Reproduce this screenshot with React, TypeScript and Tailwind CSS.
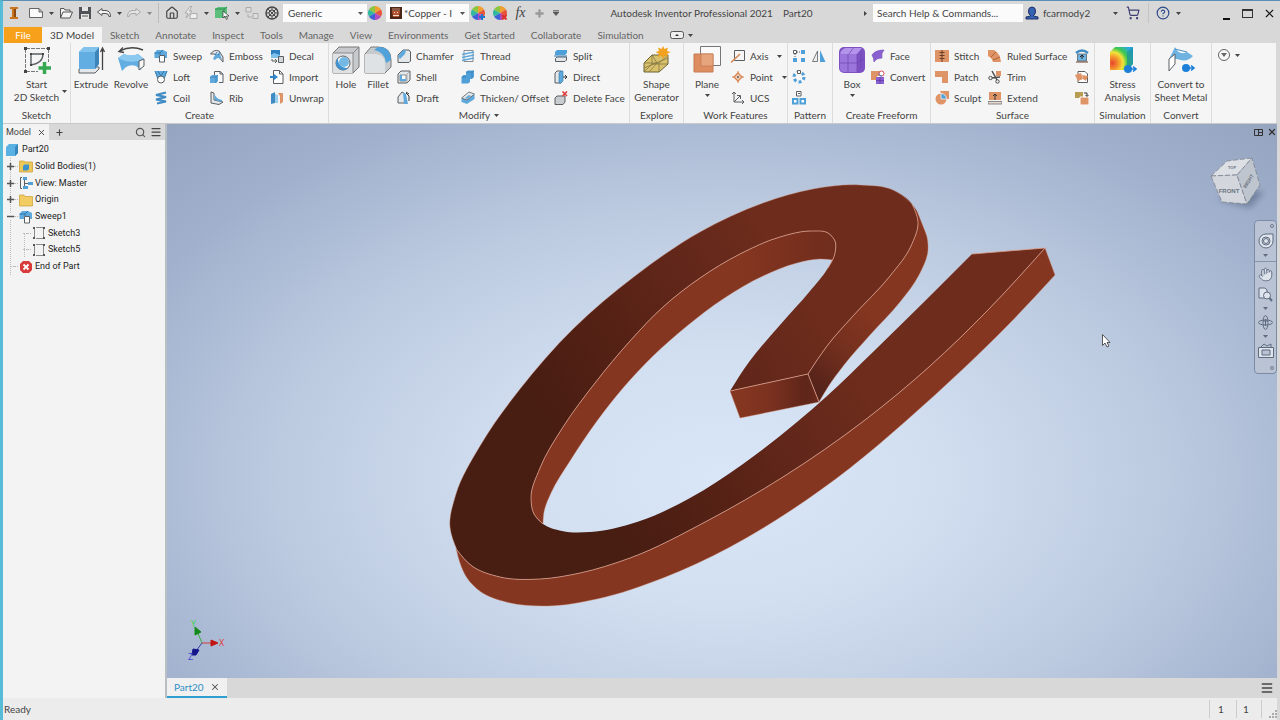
import React from 'react';
import { Search, Menu, X, Plus, ShoppingCart, CircleHelp, House, Hand } from 'lucide-react';

type Point = [number, number];

const gap = (a: Point, b: Point) => Math.hypot(b[0] - a[0], b[1] - a[1]);

// smooth cubic path through the points, tangents weighted by chord length
const spline = (pts: Point[], move = true) => {
  const last = pts.length - 1;
  const tangent = (i: number): Point => {
    const h0 = gap(pts[i - 1], pts[i]);
    const h1 = gap(pts[i], pts[i + 1]);
    return [0, 1].map(
      (k) =>
        (((pts[i][k] - pts[i - 1][k]) / h0) * h1 + ((pts[i + 1][k] - pts[i][k]) / h1) * h0) / (h0 + h1),
    ) as Point;
  };
  const endTangent = (i: number, j: number, inner: Point): Point => {
    const h = gap(pts[i], pts[j]);
    return [0, 1].map((k) => (1.5 * (pts[j][k] - pts[i][k])) / h - inner[k] / 2) as Point;
  };
  const tangents = pts.map((_, i) => (i > 0 && i < last ? tangent(i) : ([0, 0] as Point)));
  tangents[0] = endTangent(0, 1, tangents[1]);
  tangents[last] = endTangent(last - 1, last, tangents[last - 1]);
  let d = `${move ? 'M' : 'L'}${pts[0][0]},${pts[0][1]}`;
  for (let i = 0; i < last; i++) {
    const h = gap(pts[i], pts[i + 1]) / 3;
    const [b, c, m, n] = [pts[i], pts[i + 1], tangents[i], tangents[i + 1]];
    d += `C${b[0] + m[0] * h},${b[1] + m[1] * h} ${c[0] - n[0] * h},${c[1] - n[1] * h} ${c[0]},${c[1]}`;
  }
  return d;
};

const outerEdge: Point[] = [
  [1045, 248], [987, 311], [930, 366], [865, 420], [783, 477], [707, 521], [630, 558], [580, 573],
  [540, 579], [500, 577], [472, 566], [457, 550],
];
const outerBack: Point[] = [
  [457, 550], [450, 527], [456, 494], [480, 446], [520, 389], [573, 329], [635, 276], [700, 232],
  [763, 203], [813, 189], [860, 185], [893, 190], [912, 204], [918, 222], [911, 246], [890, 276],
  [853, 316], [827, 346], [808, 374],
];
const innerEdge: Point[] = [
  [730, 391], [749, 362], [780, 325], [810, 291], [828, 268], [835, 253], [835, 241], [828, 233],
  [812, 231], [780, 237], [740, 254], [700, 278], [663, 307], [630, 341], [595, 383], [563, 427],
  [540, 468], [531, 498], [534, 514], [543, 524], [562, 531], [590, 532], [637, 522], [690, 498],
  [743, 464], [797, 422], [827, 396], [873, 352], [925, 301], [972, 254],
];
const outerBottom: Point[] = [
  [456, 548], [460, 563], [467, 578], [481, 592], [506, 602], [547, 606], [597, 599], [663, 578],
  [730, 547], [790, 511], [850, 468], [907, 420], [963, 369], [1010, 323], [1055, 275],
];
const innerWallTop = innerEdge.slice(4, 20);
const innerWallBottom: Point[] = [
  [543, 524], [544, 512], [551, 493], [570, 461], [597, 421], [623, 388], [653, 356], [687, 326],
  [723, 299], [763, 276], [797, 263], [820, 259], [833, 260],
];
const hookWall: Point[] = [
  [819, 402], [828, 387], [844, 365], [870, 335], [900, 302], [919, 275], [928, 250], [927, 237],
  [923, 226], [917, 211],
];

const Model: React.FC = () => (
  <svg
    className="absolute inset-0 size-full"
    viewBox="167 124 1110 554"
    preserveAspectRatio="xMidYMid slice"
    role="img"
    aria-label="Part20 model"
  >
    <defs>
      <linearGradient id="face" gradientUnits="userSpaceOnUse" x1="560" y1="440" x2="800" y2="290">
        <stop offset="0" stopColor="#481d12" />
        <stop offset="0.35" stopColor="#552115" />
        <stop offset="0.8" stopColor="#66291b" />
        <stop offset="1" stopColor="#6d2c1c" />
      </linearGradient>
      <linearGradient id="wall" gradientUnits="userSpaceOnUse" x1="640" y1="0" x2="840" y2="0">
        <stop offset="0" stopColor="#853620" />
        <stop offset="0.5" stopColor="#853620" />
        <stop offset="1" stopColor="#6e2b1c" />
      </linearGradient>
      <linearGradient id="hook" gradientUnits="userSpaceOnUse" x1="815" y1="385" x2="880" y2="320">
        <stop offset="0" stopColor="#56231a" />
        <stop offset="0.5" stopColor="#74301e" />
        <stop offset="1" stopColor="#853620" />
      </linearGradient>
      <linearGradient id="cap" gradientUnits="userSpaceOnUse" x1="740" y1="0" x2="818" y2="0">
        <stop offset="0" stopColor="#853620" />
        <stop offset="0.4" stopColor="#7a311f" />
        <stop offset="0.85" stopColor="#5e2519" />
        <stop offset="1" stopColor="#6a2a1c" />
      </linearGradient>
    </defs>
    <path d={`${spline(innerWallTop)}${spline(innerWallBottom, false)}Z`} fill="url(#wall)" />
    <path d={`${spline(hookWall)}${spline(outerBack.slice(12), false)}Z`} fill="url(#hook)" />
    <path d={`${spline(outerEdge)}${spline(outerBottom, false)}Z`} fill="#853620" />
    <path
      d={`${spline(outerEdge)}${spline(outerBack, false)}${spline(innerEdge, false)}Z`}
      fill="url(#face)"
    />
    <path d="M730 391L808 374L819 402L740 418Z" fill="url(#cap)" />
    <g fill="none" stroke="#dda08c" strokeWidth="0.8">
      <path d={spline(outerEdge)} />
      <path d={spline(innerWallTop)} />
      <path d={spline(outerBack.slice(12))} />
      <path d="M730 391L808 374L819 402M972 254L1045 248" />
    </g>
    <g fill="none" stroke="#d08f78" strokeWidth="0.4">
      <path d={spline(outerBack.slice(0, 13))} />
      <path d={spline(outerBottom)} />
      <path d={spline(hookWall)} />
      <path d={spline(innerWallBottom)} />
      <path d="M1045 248L1055 275M730 391L740 418L819 402" />
    </g>
    {/* origin triad */}
    <g strokeWidth="1" fontFamily="Open Sans, sans-serif" fontSize="9">
      <path d="M202 643L197 631" stroke="#3fae45" />
      <path d="M202 643H212" stroke="#d03a3a" />
      <path d="M202 643L196 651" stroke="#3b3b9a" />
      <path d="M195 627L201 632L195 635Z" fill="#138a1b" stroke="#138a1b" />
      <path d="M211 640L218 643L211 646Z" fill="#c31414" stroke="#c31414" />
      <path d="M193 649L199 650L196 655L192 655Z" fill="#15158c" stroke="#15158c" />
      <text x="191" y="627" fill="#3fd44a">Y</text>
      <text x="219" y="646" fill="#e03535">X</text>
      <text x="188" y="660" fill="#3d42d0">Z</text>
    </g>
    <path
      d="M1102.500 334.500V345.500L1105 343L1107 347L1109 346L1107 342.500H1110Z"
      fill="#fff"
      stroke="#333"
      strokeWidth="0.8"
    />
  </svg>
);

const blue = '#5fa9dc';
const pale = '#e4e7e9';
const line = '#5b5f63';
const orange = '#df9468';

// 14 x 14 drawings
const small: Record<string, React.ReactNode> = {
  sweep: (
    <>
      <path d="M0.500 4L3 1H9L13 3V9H8V6H5V9H0.500Z" fill={blue} />
      <path d="M0.500 4H6L9 1M6 4V6" stroke="#2f77ad" fill="none" />
      <path d="M5.500 6.500H10.500V13H5.500Z" fill="#fff" stroke={line} />
    </>
  ),
  loft: (
    <>
      <path d="M1 1H13L10 9H4Z" fill={blue} />
      <path d="M1 1L4 9M13 1L10 9M4 1L7 6L10 1" stroke="#2f77ad" fill="none" />
      <circle cx="7" cy="9.500" r="3.500" fill="#fff" stroke={line} />
    </>
  ),
  coil: (
    <path
      d="M12 1.500L2 4L12 6L2 8.500L12 10.500L3 12.500"
      stroke="#3f8cc4"
      strokeWidth="2"
      fill="none"
    />
  ),
  emboss: (
    <>
      <path d="M0.500 5Q4 0 9 2L13 8V13L8 7Q4 4 0.500 5Z" fill={pale} stroke={line} />
      <path d="M3 10Q5 4 10 5L12 11Q8 7 5 11Z" fill={blue} />
      <path d="M5 6L7 3M8 6L10 3" stroke="#2f77ad" />
    </>
  ),
  derive: (
    <>
      <path d="M4.500 6V1.500H10L13 4V12.500H9" fill="#fafafa" stroke={line} />
      <path d="M10 1.500V4H13" fill="none" stroke={line} />
      <path d="M0 7L2 5H8V11L6 13H0Z" fill={blue} />
      <path d="M0 7H6V13M6 7L8 5" stroke="#2f77ad" strokeWidth="0.600" fill="none" />
    </>
  ),
  rib: (
    <>
      <path d="M1 1L4 2V9L13 11L9 13.500L1 12Z" fill={pale} stroke={line} />
      <path d="M4.500 3Q6 8 12 9V11L4.500 9Z" fill={blue} />
    </>
  ),
  decal: (
    <>
      <path d="M1 1H10V9H1Z" fill="#2d7fc0" />
      <path d="M1 6L4 4L10 6V9H1Z" fill="#7fc1ea" />
      <path d="M8.500 7.500H13.500V13.500H8.500Z" fill="#d4d8db" stroke={line} />
      <path d="M2 10V12H6M5 10L7 12L5 14" stroke={line} fill="none" />
    </>
  ),
  import: (
    <>
      <path d="M3.500 0.500H9.500L13 4V13.500H3.500Z" fill="#fff" stroke={line} />
      <path d="M9.500 0.500V4H13" fill="none" stroke={line} />
      <path d="M0 6H4V4L8 7L4 10V8H0Z" fill="#2d88cf" />
    </>
  ),
  unwrap: (
    <>
      <path d="M1 3L5 1V12L1 13Z" fill="#3f8cc4" />
      <path d="M5 3L8 4V12L5 12Z" fill="#9accec" />
      <path d="M8 2H13V11L10 13V5Z" fill={orange} />
    </>
  ),
  chamfer: (
    <>
      <path d="M1 6L6 1H12L13.500 3V12L12 13.500H1Z" fill={pale} stroke={line} />
      <path d="M1 7L6 1H9L8 5L3 10Z" fill={blue} />
    </>
  ),
  shell: (
    <>
      <path d="M1 4L4 1H13V10L10 13H1Z" fill={pale} stroke={line} />
      <path d="M3 5H9V11H3Z" fill="#fff" stroke={line} strokeWidth="0.700" />
      <path d="M3 5H5V9H9V11H3Z" fill={blue} />
      <path d="M10 4V13M10 4L13 1" stroke="#8a8d90" strokeWidth="0.600" />
    </>
  ),
  draft: (
    <>
      <path d="M1 12V6L5 1L8 3V12Z" fill={pale} stroke={line} />
      <path d="M6 1L9 3L11 13H7Z" fill={blue} />
      <path d="M9 2L12 5V10M9 1L12 3" stroke="#333" fill="none" />
    </>
  ),
  thread: (
    <>
      <path d="M3 1.500H12V12.500H3Z" fill="#f7f7f7" stroke={line} strokeWidth="0.700" />
      <path d="M1 5.500L13 3M1 8.500L13 6M1 11.500L13 9" stroke={blue} strokeWidth="1.500" />
    </>
  ),
  combine: (
    <>
      <path d="M5 2L7 0.500H13V7L11 9H9V12L7 13.500H0.500V7L2.500 5H5Z" fill="#4f9fd8" />
      <path d="M5 2H11L13 0.500M11 2V8M1 7H5" stroke="#2f77ad" strokeWidth="0.600" fill="none" />
    </>
  ),
  thicken: (
    <>
      <path d="M0.500 8L8 2L13.500 4V8L6 13L0.500 11Z" fill={blue} />
      <path d="M0.500 7L8 1L13.500 3L6 9Z" fill={pale} stroke={line} strokeWidth="0.800" />
      <path d="M4 7L8 4L10 5L6 8Z" fill={blue} />
    </>
  ),
  split: (
    <>
      <path d="M1 3L3 1H13V4L11 6H1Z" fill="#4f9fd8" />
      <path d="M1.500 9.500L3 8H12.500V11L11 12.500H1.500Z" fill={pale} stroke={line} />
      <path d="M0 7H13" stroke="#2f77ad" />
    </>
  ),
  direct: (
    <>
      <path d="M1 3L3 1H7V13H1Z" fill={pale} stroke={line} />
      <path d="M5 3L7 1H9V11L7 13H5Z" fill={blue} stroke="#2f77ad" strokeWidth="0.600" />
      <path d="M9 7H13M11 5L13 7L11 9" stroke="#333" fill="none" />
    </>
  ),
  deleteFace: (
    <>
      <path d="M1 7L3 5H11V11L9 13.500H1Z" fill="#c9cccf" stroke={line} />
      <path d="M8.500 0.500L13 5M13 0.500L8.500 5" stroke="#e23b3b" strokeWidth="1.600" />
    </>
  ),
  axis: (
    <>
      <path d="M3.500 1.500H13.500V11.500H3.500Z" fill="none" stroke={line} />
      <path d="M0 13.500L9 5" stroke="#d98655" strokeWidth="1.500" />
    </>
  ),
  point: (
    <>
      <path d="M7 1V13M1 7H13" stroke="#d98655" />
      <path d="M7 3L11 7L7 11L3 7Z" fill="#f4d3bd" stroke="#d98655" strokeWidth="1.400" />
      <circle cx="7" cy="7" r="1" fill="#555" />
    </>
  ),
  ucs: (
    <path
      d="M3 1V11H13M3 11L9 5M1 3L3 1L5 3M11 9L13 11L11 13M6 4.500H9.500V8"
      stroke={line}
      fill="none"
    />
  ),
  rectangular: (
    <>
      <path d="M1.500 1.500H4.500V4.500H1.500Z" fill="#fff" stroke={line} />
      <path d="M9 1H13V5H9ZM1 9H5V13H1ZM9 9H13V13H9Z" fill="#4f9fd8" />
      <path d="M5 3H9M3 5V9" stroke={line} strokeDasharray="1 1" />
    </>
  ),
  mirror: (
    <>
      <path d="M5.500 2V12.500H0.500Z" fill="#eee" stroke={line} strokeWidth="0.800" />
      <path d="M8 1V13H13.500Z" fill="#4f9fd8" />
    </>
  ),
  circular: (
    <>
      <circle cx="7" cy="7" r="5" fill="none" stroke="#4f9fd8" strokeWidth="3" strokeDasharray="2.900 2.300" />
      <path d="M5.500 0.500H8.500V3.500H5.500Z" fill="#fff" stroke={line} />
    </>
  ),
  sketchDriven: (
    <>
      <path d="M4.500 0.500H9V5H4.500Z" fill="#fff" stroke={line} />
      <path d="M6 2.500H8" stroke={line} />
      <path d="M1 8H5.500V12.500H1ZM8.500 8H13V12.500H8.500Z" fill="#fff" stroke="#4f9fd8" strokeWidth="2" />
    </>
  ),
  face: (
    <path d="M1 6Q4 1 13 1Q10 4 11 9Q5 9 3 13Q3 9 1 6Z" fill="#8a5fd0" stroke="#6f46b4" strokeWidth="0.600" />
  ),
  convert: (
    <>
      <path d="M0 1H9V6H6V10H0Z" fill={orange} />
      <path d="M5 7H13V14H5Z" fill="#8a5fd0" />
      <path d="M9 7V14M5 10.500H13" stroke="#5c35a3" strokeWidth="0.700" />
      <circle cx="10.500" cy="3.500" r="2.500" fill="#fff" stroke="#e24b5b" />
      <path d="M8 3.500A2.500 2.500 0 0 0 11 6" fill="none" stroke="#2d7fd0" />
    </>
  ),
  stitch: (
    <>
      <path d="M0 1H14V13H0Z" fill={orange} />
      <path d="M7 1V13M4.500 3.500H9.500M4.500 6.500H9.500M4.500 9.500H9.500" stroke="#6a3f28" />
    </>
  ),
  patch: <path d="M0 1H13V13H7V7H0Z" fill={orange} />,
  sculpt: (
    <>
      <path d="M5 0H14V8H9Z" fill={orange} />
      <circle cx="6" cy="8" r="5.500" fill={orange} />
      <path d="M6 2.500A5.500 5.500 0 0 1 11.500 8L6 8Z" fill="#4f9fd8" stroke="#fff" strokeWidth="0.700" />
    </>
  ),
  ruled: (
    <>
      <path d="M0 1H6Q12 4 13 13H5Q4 9 0 7Z" fill={orange} />
      <path d="M3 8L8 3M5 11L12 8" stroke="#b06235" />
    </>
  ),
  trim: (
    <>
      <path d="M8 1H13V6H8Z" fill={orange} />
      <path d="M4 1L9 10M12 7L3 8" stroke="#4a4a4a" strokeWidth="1.500" />
      <circle cx="2.500" cy="8" r="1.700" fill="#f5f5f5" stroke="#4a4a4a" />
      <circle cx="9.500" cy="11.500" r="1.700" fill="#f5f5f5" stroke="#4a4a4a" />
    </>
  ),
  extend: (
    <>
      <path d="M1 1H13V9H1Z" fill={orange} />
      <path d="M0 10.500H14V13H0Z" fill="#e9d9cf" stroke={line} strokeWidth="0.700" />
      <path d="M7 9V3M5 5L7 3L9 5" stroke="#333" fill="none" />
    </>
  ),
  replace: (
    <>
      <path d="M1 4Q7 -1 13 4" stroke="#3f8cc4" strokeWidth="2.500" fill="none" />
      <path d="M2.500 5H11.500V12H2.500Z" fill="#6fb5e2" stroke={line} strokeWidth="0.800" />
      <path d="M1 13H13" stroke="#6a3f28" />
      <path d="M7 10V6M5 8L7 6L9 8" stroke="#222" fill="none" />
    </>
  ),
  repair: (
    <>
      <path d="M3 1.500H10L12.500 4V12.500H3Z" fill="#fff" stroke={line} />
      <path d="M0 5L6 3L8 9L3 11Z" fill={orange} />
      <path d="M7 5L13 6L11 11L8 9Z" fill={orange} />
    </>
  ),
  fitMesh: (
    <>
      <path d="M0 1H8V7H0Z" fill="#b79c52" />
      <path d="M5 6H14V14H5Z" fill={orange} stroke="#fff" />
      <path d="M9 2H12V5M10.500 4L12 5.500L13.500 4" stroke="#333" fill="none" />
    </>
  ),
  part: (
    <>
      <path d="M1 4L4 1H13V10L10 13H1Z" fill="#59b0e3" />
      <path d="M10 4V13L13 10V1Z" fill="#3586ba" />
    </>
  ),
  bodies: (
    <>
      <path d="M0.500 2H5L6 3H13.500V13H0.500Z" fill="#edc75a" stroke="#c99d33" strokeWidth="0.700" />
      <path d="M4 7L5.500 5.500H10V10L8.500 11.500H4Z" fill="#3f93ca" />
    </>
  ),
  folder: <path d="M0.500 2H5L6 3.500H13.500V13H0.500Z" fill="#f2cc62" stroke="#c99d33" strokeWidth="0.700" />,
  view: (
    <>
      <path d="M3 1.500H1.500V12.500H3M5.500 3V11.500M5.500 7.500H9" stroke={line} fill="none" />
      <path d="M4 1H8V4H4ZM9 6H14V9H9ZM4 10H9V13H4Z" fill="#4f9fd8" />
    </>
  ),
  sketch: (
    <>
      <path d="M2.500 3V12M11.500 3V12M4 1.500H11M4 12.500H11" stroke="#8a8a8a" fill="none" />
      <path d="M1 1H3V3H1ZM11 1H13V3H11ZM1 11H3V13H1ZM11 11H13V13H11Z" fill="#555" />
    </>
  ),
  end: (
    <>
      <path d="M4 1H10L13 4V10L10 13H4L1 10V4Z" fill="#d93a3a" />
      <path d="M4.500 4.500L9.500 9.500M9.500 4.500L4.500 9.500" stroke="#fff" strokeWidth="1.800" />
    </>
  ),
};

// 28 x 28 drawings
const large: Record<string, React.ReactNode> = {
  startSketch: (
    <>
      <path d="M3 2.500H25M2.500 3V24M25.500 3V16M3 25.500H15" stroke="#777" strokeDasharray="4 1" />
      <path d="M8 8H20Q20 17 8 19Z" fill="none" stroke={line} strokeWidth="1.400" />
      <path d="M1 1H4V4H1ZM24 1H27V4H24ZM1 24H4V27H1ZM7 7H9V9H7ZM19 7H21V9H19ZM7 18H9V20H7Z" fill="#444" />
      <path d="M21.500 16V28M15.500 22H28" stroke="#35a852" strokeWidth="3.500" />
    </>
  ),
  extrude: (
    <>
      <path d="M2 23L7 21H22V23L18 27H2Z" fill={pale} stroke={line} />
      <path d="M2 6L7 1H22V18L18 23H2Z" fill="#62aee2" />
      <path d="M18 6V23L22 18V1Z" fill="#3f84b8" />
      <path d="M2 6L7 1H22L18 6Z" fill="#82c3ee" />
      <path d="M25.500 24V3M23.500 6L25.500 2L27.500 6" stroke="#444" strokeWidth="1.300" fill="none" />
    </>
  ),
  revolve: (
    <>
      <path d="M3 5Q14 -1 26 4M6 1.500L2 5.500L7 6.500" stroke="#444" strokeWidth="1.400" fill="none" />
      <path d="M1 12L7 8Q14 11 21 8L27 13L24 24L19 20Q14 18 9 21L5 25Z" fill="#62aee2" />
      <path d="M1 12L7 8Q14 11 21 8L27 13Q14 19 1 12Z" fill="#8bc9f0" />
      <path d="M22 15L27 13V20L22 24Z" fill="#f6f6f6" stroke={line} />
    </>
  ),
  hole: (
    <>
      <path d="M1 7L7 1H27V21L21 27H1Z" fill="#c7cacc" stroke="#777" />
      <path d="M1 7H21V27H1Z" fill="#dfe2e4" />
      <path d="M21 7L27 1M1 7H21V27" stroke="#888" fill="none" />
      <circle cx="11" cy="17" r="7" fill="#f7fbfd" stroke={line} />
      <path d="M6 12A7 7 0 0 0 16 22A9 9 0 0 1 6 12Z" fill="#3f93d0" />
      <circle cx="12" cy="16" r="5" fill="#74b8e4" />
    </>
  ),
  fillet: (
    <>
      <path d="M1 8L7 1H14Q27 1 27 14V21L21 27H1Z" fill="#c7cacc" stroke="#777" />
      <path d="M1 8H10Q21 8 21 18V27H1Z" fill="#dfe2e4" />
      <path d="M10 4L14 1Q27 1 27 14L22 17Q21 6 10 4Z" fill="#4fa2da" />
    </>
  ),
  shape: (
    <>
      <path d="M1 17L9 9H25V18L16 26H1Z" fill="#d9c06a" stroke="#6b6235" />
      <path d="M1 17H16L25 9M16 17V26M6 26L14 17L9 9M1 22L25 12M1 26L9 18H25M9 9V18" stroke="#7a7044" strokeWidth="0.700" fill="none" />
      <path d="M20 0L21.500 3L25 1.500L24 5L27.500 6L24 8L25 11L21.500 9.500L20 13L18.500 9.500L15 11L16 8L12.500 6L16 5L15 1.500L18.500 3Z" fill="#f3a21f" />
    </>
  ),
  plane: (
    <>
      <path d="M7.500 0.500H27.500V19.500H7.500Z" fill="#fafafa" stroke="#777" />
      <path d="M1 8H20V26H1Z" fill="#dd8d60" stroke="#c57a4f" />
      <path d="M8 8H20V20H8Z" fill="#e7a57e" stroke="#bd7449" strokeWidth="0.600" />
    </>
  ),
  box: (
    <>
      <rect x="1" y="1" width="26" height="26" rx="5" fill="#7d50c4" />
      <path d="M2 7Q5 2 8 2H24L19 8H3Z" fill="#b493ea" />
      <path d="M2 8H19V26H6Q2 26 2 22Z" fill="#9c75dc" />
      <path d="M10 8V26M2 17H19L27 12M19 8V26M16 1L11 8M23 5V22" stroke="#6b46ac" strokeWidth="0.700" fill="none" />
    </>
  ),
  sheet: (
    <>
      <path d="M2 13L8 1Q12 10 20 6L26 10Q20 17 10 13Z" fill="#6fb3e2" />
      <path d="M2 13L8 8V18L2 25Z" fill="#fff" stroke={line} />
      <path d="M8 3L20 6" stroke="#4b8fc2" />
      <circle cx="19" cy="22" r="4" fill="#1d7fd8" />
      <path d="M19 22H26M24 19.500L27 22L24 24.500" stroke="#1d7fd8" strokeWidth="1.600" fill="none" />
    </>
  ),
  stress: (
    <>
      <defs>
        <radialGradient id="heat" cx="0.1" cy="0.700" r="0.950">
          <stop offset="0" stopColor="#e8452f" />
          <stop offset="0.300" stopColor="#f59a2c" />
          <stop offset="0.500" stopColor="#f2e33b" />
          <stop offset="0.700" stopColor="#3cc94d" />
          <stop offset="1" stopColor="#2aa9e0" />
        </radialGradient>
      </defs>
      <path d="M1 6L6 1H24V18L18 24H1Z" fill="url(#heat)" />
      <path d="M18 6L24 1V18L18 24Z" fill="#1c8d95" fillOpacity="0.600" />
      <circle cx="19" cy="23" r="4" fill="#1d7fd8" />
      <path d="M19 23H26M24 20.500L27 23L24 25.500" stroke="#1d7fd8" strokeWidth="1.600" fill="none" />
    </>
  ),
};

const Icon: React.FC<{ name: string }> = ({ name }) => (
  <svg className="size-3.5 shrink-0" viewBox="0 0 14 14" fill="none" aria-hidden="true">
    {small[name]}
  </svg>
);

const Caret: React.FC<{ className?: string }> = ({ className = 'text-[#444]' }) => (
  <svg className={`h-[3px] w-[5px] shrink-0 ${className}`} viewBox="0 0 5 3" aria-hidden="true">
    <path d="M0 0H5L2.500 3Z" fill="currentColor" />
  </svg>
);

interface BigProps {
  icon: string;
  lines: string[];
  className: string;
  caret?: boolean;
}

const BigTool: React.FC<BigProps> = ({ icon, lines, className, caret }) => (
  <button className={`flex shrink-0 flex-col items-center ${className}`}>
    <svg className="size-7" viewBox="0 0 28 28" fill="none" aria-hidden="true">
      {large[icon]}
    </svg>
    <span className="mt-1 whitespace-nowrap leading-[13px]">
      {lines.map((text) => (
        <span className="block" key={text}>
          {text}
        </span>
      ))}
    </span>
    {caret && <Caret className="mt-[3px] text-[#444]" />}
  </button>
);

interface Tool {
  icon: string;
  label?: string;
  caret?: boolean;
}

const ToolColumn: React.FC<{ tools: Tool[]; className?: string }> = ({ tools, className = '' }) => (
  <div className={`flex shrink-0 flex-col gap-px ${className}`}>
    {tools.map(({ icon, label, caret }) => (
      <button className="flex h-5 items-center gap-[5px] whitespace-nowrap" key={icon} aria-label={label || icon}>
        <Icon name={icon} />
        {label}
        {caret && <Caret className="ml-1 text-[#444]" />}
      </button>
    ))}
  </div>
);

interface PanelProps {
  title: string;
  className: string;
  caret?: boolean;
  children?: React.ReactNode;
}

const Panel: React.FC<PanelProps> = ({ title, className, caret, children }) => (
  <section className={`flex shrink-0 flex-col border-r border-[#dcdcdc] ${className}`}>
    <div className="flex flex-1 pt-[3px]">{children}</div>
    <h2 className="flex h-4 items-center justify-center gap-1 whitespace-nowrap">
      {title}
      {caret && <Caret />}
    </h2>
  </section>
);

const tabs = [
  'Sketch',
  'Annotate',
  'Inspect',
  'Tools',
  'Manage',
  'View',
  'Environments',
  'Get Started',
  'Collaborate',
  'Simulation',
];

const ColorWheel: React.FC<{ badge?: 'add' | 'clear' }> = ({ badge }) => (
  <svg className="size-3.5 shrink-0" viewBox="0 0 14 14" aria-hidden="true">
    <path d="M7 7L7 0A7 7 0 0 1 13 3.500Z" fill="#f0a030" />
    <path d="M7 7L13 3.500A7 7 0 0 1 13 10.500Z" fill="#e8553a" />
    <path d="M7 7L13 10.500A7 7 0 0 1 7 14Z" fill="#b04bc0" />
    <path d="M7 7L7 14A7 7 0 0 1 1 10.500Z" fill="#3f62d8" />
    <path d="M7 7L1 10.500A7 7 0 0 1 1 3.500Z" fill="#2fb7a0" />
    <path d="M7 7L1 3.500A7 7 0 0 1 7 0Z" fill="#8bc63f" />
    {badge === 'add' && <path d="M11 8V14M8 11H14" stroke="#1f74d0" strokeWidth="2" />}
    {badge === 'clear' && <path d="M9 9L13.500 13.500M13.500 9L9 13.500" stroke="#e0302c" strokeWidth="2" />}
  </svg>
);

const TitleBar: React.FC = () => (
  <header className="mb-0.5 flex h-6 shrink-0 items-center text-[#444]">
    <div className="flex w-[276px] shrink-0 items-center justify-between pl-1.5">
      <svg className="mr-1 h-3.5 w-2.5" viewBox="0 0 10 14" aria-label="Inventor">
        <path d="M1 1H9V3H7V11H9V13H1V11H3V3H1Z" fill="#c9731d" />
        <path d="M5 3H7V11H5Z" fill="#8c4a12" />
      </svg>
      <button aria-label="New">
        <svg className="h-3 w-3.5" viewBox="0 0 14 12" fill="#fafafa" stroke="#666">
          <path d="M0.500 1.500H10L13.500 5V10.500H0.500ZM10 1.500V5H13.500" />
        </svg>
      </button>
      <Caret />
      <button aria-label="Open">
        <svg className="h-3 w-3.5" viewBox="0 0 14 12" fill="#f4f4f4" stroke="#555">
          <path d="M1.500 11V1.500H5L6 3H11V5M1.500 11L4 5H13.500L11 11Z" />
        </svg>
      </button>
      <button aria-label="Save">
        <svg className="size-3" viewBox="0 0 12 12">
          <path d="M0 0H12V12H0Z" fill="#505357" />
          <path d="M3 0H9V4H3ZM2 7H10V12H2Z" fill="#e5e5e5" />
          <path d="M3 9H9" stroke="#505357" />
        </svg>
      </button>
      <button aria-label="Undo">
        <svg className="h-2.5 w-3.5" viewBox="0 0 14 10" fill="#f4f4f4" stroke="#555">
          <path d="M0.500 4L5 0.500V2.500H9Q13.500 3 13.500 8.500H12Q11.500 5.500 9 5.500H5V7.500Z" />
        </svg>
      </button>
      <Caret />
      <button aria-label="Redo">
        <svg className="h-2.5 w-3.5" viewBox="0 0 14 10" fill="#e4e4e4" stroke="#aaa">
          <path d="M13.500 4L9 0.500V2.500H5Q0.500 3 0.500 8.500H2Q2.500 5.500 5 5.500H9V7.500Z" />
        </svg>
      </button>
      <Caret className="text-[#888]" />
      <span className="h-5 w-px bg-[#bbb]" />
      <button aria-label="Home">
        <House size={14} strokeWidth={2} />
      </button>
      <button aria-label="Update">
        <svg className="size-3.5" viewBox="0 0 14 14" fill="#eee" stroke="#aaa">
          <path d="M6 0.500L1 7H4L2 12L8 5H5L8 0.500ZM8 7.500H13V12.500H6V9Z" />
        </svg>
      </button>
      <Caret />
      <button aria-label="Select">
        <svg className="size-3.5" viewBox="0 0 14 14">
          <path d="M0 3L3 1H12V10L10 12H0Z" fill="#5cc07c" />
          <path d="M0 3H9V12M9 3L12 1" stroke="#2f8f50" fill="none" />
          <path d="M8 5V12L10 10L11.500 13.500L12.500 13L11.500 10H14Z" fill="#fff" stroke="#333" strokeWidth="0.700" />
        </svg>
      </button>
      <Caret />
      <button aria-label="Relationships">
        <svg className="size-3.5" viewBox="0 0 14 14" fill="#ddd" stroke="#aaa">
          <path d="M1 1.500H6V6H1ZM8 7.500H13V12.500H8ZM3 8V11H7" />
        </svg>
      </button>
      <button aria-label="Material browser">
        <svg className="size-3.5" viewBox="0 0 14 14" fill="none" stroke="#4a4a4a">
          <circle cx="7" cy="7" r="6" strokeWidth="1.500" />
          <circle cx="7" cy="7" r="3" />
          <path d="M3 3L11 11M11 3L3 11M7 1V4M7 10V13M1 7H4M10 7H13" />
        </svg>
      </button>
    </div>
    <div className="relative ml-1 flex h-[18px] w-[84px] shrink-0 items-center bg-[#fbfbfb]">
      <select className="size-full appearance-none pl-[5px] outline-none" aria-label="Material">
        <option>Generic</option>
      </select>
      <Caret className="pointer-events-none absolute right-1 text-[#555]" />
    </div>
    <span className="ml-px mr-1">
      <ColorWheel />
    </span>
    <div className="relative flex h-[18px] w-[83px] shrink-0 items-center bg-[#fbfbfb] pl-1">
      <svg className="size-3 shrink-0" viewBox="0 0 12 12" aria-hidden="true">
        <path d="M0 0H12V12H0Z" fill="#4a2618" />
        <path d="M2 1H10V4H2Z" fill="#8a5a44" />
        <path d="M2 4H10L9 10H3Z" fill="#b4532e" />
        <path d="M4 5H5V6H4ZM7 5H8V6H7ZM3 8H9V9H3Z" fill="#f1d9cb" />
      </svg>
      <select className="h-full min-w-0 flex-1 appearance-none pl-0.5 outline-none" aria-label="Appearance">
        <option>*Copper - I</option>
      </select>
      <Caret className="pointer-events-none absolute right-1 text-[#555]" />
    </div>
    <div className="flex w-[90px] shrink-0 items-center justify-between pl-0.5">
      <ColorWheel badge="add" />
      <ColorWheel badge="clear" />
      <span className="font-['Liberation_Serif',serif] text-[14px] italic leading-4">fx</span>
      <Plus size={11} strokeWidth={5} color="#999" />
      <svg className="h-1.5 w-1.5" viewBox="0 0 6 6" aria-hidden="true">
        <path d="M0 0.500H6M0 2H6L3 5.500Z" fill="#555" stroke="#555" strokeWidth="0.700" />
      </svg>
    </div>
    <h1 className="ml-auto whitespace-nowrap">Autodesk Inventor Professional 2021</h1>
    <span className="ml-2.5 mr-auto">Part20</span>
    <svg className="mr-1.5 h-[5px] w-[3px]" viewBox="0 0 3 5" aria-hidden="true">
      <path d="M0 0V5L3 2.500Z" fill="#444" />
    </svg>
    <input
      className="h-[18px] w-[150px] shrink-0 bg-[#fbfbfb] pl-1 outline-none placeholder:text-[#444]"
      aria-label="Search"
      placeholder="Search Help & Commands..."
    />
    <div className="flex w-[257px] shrink-0 items-center pl-0.5">
      <svg className="size-3.5" viewBox="0 0 14 14" aria-hidden="true">
        <path d="M3.500 5A3.500 4 0 0 1 10.500 5Q10.500 9 8.500 9V10L13 11V13H1V11L5.500 10V9Q3.500 9 3.500 5Z" fill="#3663b4" stroke="#1f2f63" />
      </svg>
      <span className="ml-1 w-[70px]">fcarmody2</span>
      <Caret />
      <ShoppingCart className="ml-2 text-[#3c3f73]" size={14} strokeWidth={2} />
      <span className="ml-2 h-5 w-px bg-[#c4c4c4]" />
      <CircleHelp className="ml-[7px] text-[#2c4a8a]" size={14} strokeWidth={2} />
      <Caret className="ml-1.5 text-[#444]" />
      <div className="ml-auto flex items-center gap-2.5 pr-1 text-[#111]">
        <button className="flex h-3.5 w-3 items-end justify-center" aria-label="Minimize">
          <span className="h-0.5 w-[7px] bg-[#111]" />
        </button>
        <button className="h-[9px] w-[11px] border border-t-2 border-[#333]" aria-label="Maximize" />
        <button aria-label="Close">
          <X size={13} strokeWidth={2} />
        </button>
      </div>
    </div>
  </header>
);

const Ribbon: React.FC = () => (
  <div className="mr-1 flex h-20 shrink-0 bg-[#f5f5f5] text-[#444]">
    <Panel title="Sketch" className="w-[68px]">
      <BigTool icon="startSketch" lines={['Start', '2D Sketch']} className="w-[59px] pl-2" />
      <span className="mt-11">
        <Caret className="text-[#444]" />
      </span>
    </Panel>
    <Panel title="Create" className="w-[258px]">
      <BigTool icon="extrude" lines={['Extrude']} className="w-10" />
      <BigTool icon="revolve" lines={['Revolve']} className="w-10" />
      <ToolColumn
        className="ml-[3px] w-14"
        tools={[
          { icon: 'sweep', label: 'Sweep' },
          { icon: 'loft', label: 'Loft' },
          { icon: 'coil', label: 'Coil' },
        ]}
      />
      <ToolColumn
        className="w-[60px]"
        tools={[
          { icon: 'emboss', label: 'Emboss' },
          { icon: 'derive', label: 'Derive' },
          { icon: 'rib', label: 'Rib' },
        ]}
      />
      <ToolColumn
        tools={[
          { icon: 'decal', label: 'Decal' },
          { icon: 'import', label: 'Import' },
          { icon: 'unwrap', label: 'Unwrap' },
        ]}
      />
    </Panel>
    <Panel title="Modify" className="w-[301px]" caret>
      <BigTool icon="hole" lines={['Hole']} className="ml-px w-8" />
      <BigTool icon="fillet" lines={['Fillet']} className="w-8" />
      <ToolColumn
        className="ml-[3px] w-16"
        tools={[
          { icon: 'chamfer', label: 'Chamfer' },
          { icon: 'shell', label: 'Shell' },
          { icon: 'draft', label: 'Draft' },
        ]}
      />
      <ToolColumn
        className="w-[93px]"
        tools={[
          { icon: 'thread', label: 'Thread' },
          { icon: 'combine', label: 'Combine' },
          { icon: 'thicken', label: 'Thicken/ Offset' },
        ]}
      />
      <ToolColumn
        tools={[
          { icon: 'split', label: 'Split' },
          { icon: 'direct', label: 'Direct' },
          { icon: 'deleteFace', label: 'Delete Face' },
        ]}
      />
    </Panel>
    <Panel title="Explore" className="w-[54px]">
      <BigTool icon="shape" lines={['Shape', 'Generator']} className="w-full" />
    </Panel>
    <Panel title="Work Features" className="w-[104px]">
      <BigTool icon="plane" lines={['Plane']} className="w-[46px]" caret />
      <ToolColumn
        className="ml-px"
        tools={[
          { icon: 'axis', label: 'Axis', caret: true },
          { icon: 'point', label: 'Point', caret: true },
          { icon: 'ucs', label: 'UCS' },
        ]}
      />
    </Panel>
    <Panel title="Pattern" className="w-[45px]">
      <ToolColumn
        className="ml-1 w-5"
        tools={[{ icon: 'rectangular' }, { icon: 'circular' }, { icon: 'sketchDriven' }]}
      />
      <ToolColumn tools={[{ icon: 'mirror' }]} />
    </Panel>
    <Panel title="Create Freeform" className="w-[98px]">
      <BigTool icon="box" lines={['Box']} className="w-[38px]" caret />
      <ToolColumn
        tools={[
          { icon: 'face', label: 'Face' },
          { icon: 'convert', label: 'Convert' },
        ]}
      />
    </Panel>
    <Panel title="Surface" className="w-[164px]">
      <ToolColumn
        className="ml-1 w-[53px]"
        tools={[
          { icon: 'stitch', label: 'Stitch' },
          { icon: 'patch', label: 'Patch' },
          { icon: 'sculpt', label: 'Sculpt' },
        ]}
      />
      <ToolColumn
        className="w-[87px]"
        tools={[
          { icon: 'ruled', label: 'Ruled Surface' },
          { icon: 'trim', label: 'Trim' },
          { icon: 'extend', label: 'Extend' },
        ]}
      />
      <ToolColumn tools={[{ icon: 'replace' }, { icon: 'repair' }, { icon: 'fitMesh' }]} />
    </Panel>
    <Panel title="Simulation" className="w-14">
      <BigTool icon="stress" lines={['Stress', 'Analysis']} className="w-full" />
    </Panel>
    <Panel title="Convert" className="w-[61px]">
      <BigTool icon="sheet" lines={['Convert to', 'Sheet Metal']} className="w-full" />
    </Panel>
    <button className="flex items-center gap-1 self-start pl-[5px] pt-[5px]" aria-label="Show panels">
      <svg className="size-3.5" viewBox="0 0 14 14" aria-hidden="true">
        <circle cx="7" cy="7" r="5.500" fill="#f8f8f8" stroke="#666" />
        <path d="M4 5H10L7 9Z" fill="#666" />
      </svg>
      <Caret />
    </button>
  </div>
);

interface Node {
  icon: string;
  label: string;
  toggle?: '+' | '-';
  depth: number;
}

const nodes: Node[] = [
  { icon: 'bodies', label: 'Solid Bodies(1)', toggle: '+', depth: 1 },
  { icon: 'view', label: 'View: Master', toggle: '+', depth: 1 },
  { icon: 'folder', label: 'Origin', toggle: '+', depth: 1 },
  { icon: 'sweep', label: 'Sweep1', toggle: '-', depth: 1 },
  { icon: 'sketch', label: 'Sketch3', depth: 2 },
  { icon: 'sketch', label: 'Sketch5', depth: 2 },
  { icon: 'end', label: 'End of Part', depth: 1 },
];

const Browser: React.FC = () => (
  <aside className="flex w-[162px] shrink-0 flex-col bg-[#f3f3f3] font-['Roboto',sans-serif] text-[9px] text-[#222]">
    <div className="flex h-4 items-center bg-[#d8d8d8]">
      <button className="flex h-full items-center gap-1.5 bg-[#f3f3f3] px-[3px] text-[#444]">
        Model
        <X size={9} strokeWidth={2.500} />
      </button>
      <button className="ml-1.5" aria-label="Add panel">
        <Plus size={9} strokeWidth={3} color="#444" />
      </button>
      <button className="ml-auto" aria-label="Search browser">
        <Search size={11} strokeWidth={2.500} color="#555" />
      </button>
      <button className="ml-1 mr-[3px]" aria-label="Browser menu">
        <Menu size={12} strokeWidth={2.500} color="#444" />
      </button>
    </div>
    <div className="relative pt-px">
      <span className="absolute left-[7px] top-[18px] h-[117px] border-l border-dotted border-[#bbb]" />
      <span className="absolute left-[21px] top-[94px] h-[23px] border-l border-dotted border-[#bbb]" />
      <div className="flex h-[17px] items-center gap-[3px] pl-0.5">
        <Icon name="part" />
        Part20
      </div>
      <ul className="flex h-[117px] flex-col">
        {nodes.map(({ icon, label, toggle, depth }) => (
          <li className={`relative flex flex-1 items-center ${depth === 2 ? 'pl-[17px]' : 'pl-1'}`} key={label}>
            {toggle ? (
              <button className="flex w-[7px] justify-center bg-[#f3f3f3]" aria-label={`Toggle ${label}`}>
                <svg className="size-[7px]" viewBox="0 0 7 7" stroke="#555" strokeWidth="1.500">
                  <path d={toggle === '+' ? 'M3.500 0V7M0 3.500H7' : 'M0 3.500H7'} />
                </svg>
              </button>
            ) : (
              <span className="ml-[3px] w-1 border-t border-dotted border-[#bbb]" />
            )}
            <span className="mr-px w-1 border-t border-dotted border-[#bbb]" />
            <Icon name={icon} />
            <span className="ml-0.5">{label}</span>
          </li>
        ))}
      </ul>
    </div>
  </aside>
);

const ViewCube: React.FC = () => (
  <svg className="absolute right-2.5 top-6 h-[70px] w-[65px]" viewBox="1202 148 65 70" role="img" aria-label="View cube">
    <defs>
      <filter id="soft" x="-30%" y="-80%" width="160%" height="260%">
        <feGaussianBlur stdDeviation="3" />
      </filter>
    </defs>
    <path d="M1218 200L1250 208L1264 192L1240 188Z" fill="#60708e" opacity="0.7" filter="url(#soft)" />
    <g stroke="#7d848f" strokeWidth="0.8" strokeDasharray="5 2">
      <path d="M1211 176L1227 161L1252 158L1237 175Z" fill="#dcdfe4" />
      <path d="M1211 176L1237 175L1247 204L1222 202Z" fill="#d3d7dd" />
      <path d="M1237 175L1252 158L1260 185L1247 204Z" fill="#bfc5ce" />
    </g>
    <g fill="#6b7380" fontFamily="Liberation Sans, sans-serif" fontWeight="bold" textAnchor="middle">
      <text x="1229" y="193" fontSize="6">FRONT</text>
      <text x="1250" y="182" fontSize="5" transform="rotate(-58 1250 182)">RIGHT</text>
      <text x="1232" y="169" fontSize="4">TOP</text>
    </g>
  </svg>
);

const NavBar: React.FC = () => (
  <nav className="absolute right-0 top-24 flex w-[23px] flex-col items-center gap-[5px] rounded border border-[#7b8ba6] bg-[#b9c3d4] py-[3px] text-[#5f6b80]">
    <span className="mr-0.5 size-1 self-end rounded-full border border-[#6d7b93]" />
    <button aria-label="Steering wheel">
      <svg className="size-4" viewBox="0 0 16 16" fill="#dfe4ec" stroke="currentColor">
        <path d="M8 1H15V8A7 7 0 1 1 8 1Z" />
        <circle cx="8" cy="8" r="4" />
        <circle cx="8" cy="8" r="2.500" />
      </svg>
    </button>
    <span className="w-full border-b border-[#8593ab] pb-1">
      <Caret className="mx-auto text-[#5f6b80]" />
    </span>
    <button aria-label="Pan">
      <Hand size={15} strokeWidth={1.500} fill="#dfe4ec" />
    </button>
    <button aria-label="Zoom">
      <svg className="size-[15px]" viewBox="0 0 15 15" fill="#dfe4ec" stroke="currentColor">
        <path d="M1 1H7L9 3V11H1Z" />
        <circle cx="9" cy="8.500" r="3.500" />
        <path d="M11.500 11L14 14" strokeWidth="2" />
      </svg>
    </button>
    <Caret className="text-[#5f6b80]" />
    <button aria-label="Orbit">
      <svg className="size-[15px]" viewBox="0 0 15 15" fill="none" stroke="currentColor">
        <ellipse cx="7.500" cy="7.500" rx="7" ry="2.500" />
        <ellipse cx="7.500" cy="7.500" rx="2.500" ry="7" />
        <path d="M5 6H10M7.500 4V11" />
      </svg>
    </button>
    <Caret className="text-[#5f6b80]" />
    <button aria-label="Look at">
      <svg className="size-4" viewBox="0 0 16 16" fill="#dfe4ec" stroke="currentColor">
        <path d="M3 4L6 1L9 3L13 1V4" fill="none" />
        <path d="M0.500 4.500H15.500V14.500H0.500Z" />
        <path d="M4 7H12V12H4Z" fill="#b9c3d4" />
      </svg>
    </button>
    <span className="mr-0.5 mt-0.5 size-1 self-end rounded-full border border-[#6d7b93]" />
  </nav>
);

const App: React.FC = () => {
  return (
    <div className="flex h-screen flex-col overflow-hidden border-l-[3px] border-t border-l-[#56bcd8] border-t-[#5b8fb5] bg-[#d8d8d8] font-['Lato','Open_Sans',sans-serif] text-[10px] leading-[13px]">
      <TitleBar />
      <nav className="flex h-4 shrink-0 items-stretch pl-px text-[#666]">
        <button className="w-[38px] bg-[#f7a01c] text-white">File</button>
        <button className="bg-[#f5f5f5] px-2 text-[#444]">3D Model</button>
        {tabs.map((tab) => (
          <button className="whitespace-nowrap px-2" key={tab}>
            {tab}
          </button>
        ))}
        <button className="ml-[18px] flex items-center gap-1" aria-label="Ribbon appearance">
          <svg className="h-2 w-3.5" viewBox="0 0 14 8" fill="#eee" stroke="#555">
            <rect x="0.500" y="0.500" width="13" height="7" rx="2" />
            <path d="M5 5H9L7 3Z" fill="#333" stroke="none" />
          </svg>
          <Caret />
        </button>
      </nav>
      <Ribbon />
      <div className="mr-[3px] flex min-h-0 flex-1 border-t border-[#c9c9c9]">
        <Browser />
        <div className="flex min-w-0 flex-1 flex-col border-l-2 border-[#b9bdc4]">
          <main className="relative min-h-0 flex-1 bg-[radial-gradient(ellipse_62%_76%_at_50%_64%,#d9e6f8_0%,#d2dff1_30%,#bccae0_65%,#a1b1cd_95%,#93a3be_120%)]">
            <Model />
            <div className="absolute right-0 top-[3px] flex items-center gap-1 text-[#333]">
              <button aria-label="Restore view">
                <svg className="h-[9px] w-[9px]" viewBox="0 0 9 9" fill="none" stroke="currentColor">
                  <path d="M0.500 1.500H8.500V7.500H0.500ZM4.500 1.500V7.500M4.500 4.500H8.500" />
                </svg>
              </button>
              <button aria-label="Close view">
                <X size={10} strokeWidth={3} />
              </button>
            </div>
            <ViewCube />
            <NavBar />
          </main>
          <div className="flex h-5 shrink-0 items-stretch">
            <button className="flex items-center gap-1.5 border-b-2 border-[#2f9fd0] bg-[#f0f0f0] px-[7px] text-[#2f8fc4]">
              Part20
              <X size={10} strokeWidth={2.500} color="#555" />
            </button>
            <button className="ml-auto mr-[3px]" aria-label="Document list">
              <Menu size={14} strokeWidth={2.500} color="#444" />
            </button>
          </div>
        </div>
      </div>
      <footer className="mr-[3px] flex h-[22px] shrink-0 items-stretch bg-[#ececec] text-[#444]">
        <span className="flex flex-1 items-center pl-px">Ready</span>
        <span className="my-0.5 flex w-[27px] items-center border-l border-[#ccc] pl-2">1</span>
        <span className="my-0.5 flex w-[25px] items-center border-l border-[#ccc] pl-1.5">1</span>
        <span className="my-0.5 flex w-4 items-end justify-end border-l border-[#ccc]">
          <svg className="size-2" viewBox="0 0 8 8" fill="#aaa" aria-hidden="true">
            <path d="M6 0H8V2H6ZM3 3H5V5H3ZM6 3H8V5H6ZM0 6H2V8H0ZM3 6H5V8H3ZM6 6H8V8H6Z" />
          </svg>
        </span>
      </footer>
    </div>
  );
};

export default App;
